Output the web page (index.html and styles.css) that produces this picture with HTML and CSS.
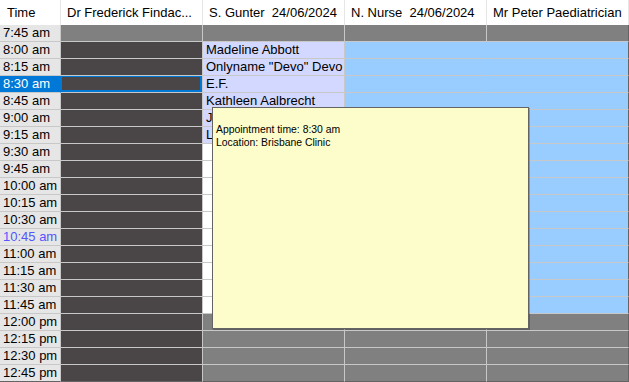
FILE: index.html
```html
<!DOCTYPE html>
<html>

<head>
    <meta charset="utf-8">
    <title>Appointment Book</title>
    <link rel="stylesheet" href="styles.css">
</head>

<body>
    <div class="book">
        <div class="row head">
          <div class="cell">Time</div>
          <div class="cell">Dr Frederick Findac...</div>
          <div class="cell">S. Gunter  24/06/2024</div>
          <div class="cell">N. Nurse  24/06/2024</div>
          <div class="cell">Mr Peter Paediatrician</div>
        </div>

        <div class="row">
          <div class="cell time">7:45 am</div>
          <div class="cell off"></div>
          <div class="cell off"></div>
          <div class="cell off"></div>
          <div class="cell off"></div>
        </div>
        <div class="row">
          <div class="cell time">8:00 am</div>
          <div class="cell closed"></div>
          <div class="cell booked">Madeline Abbott</div>
          <div class="cell open"></div>
          <div class="cell open"></div>
        </div>
        <div class="row">
          <div class="cell time">8:15 am</div>
          <div class="cell closed"></div>
          <div class="cell booked">Onlyname "Devo" Devo</div>
          <div class="cell open"></div>
          <div class="cell open"></div>
        </div>
        <div class="row selected">
          <div class="cell time">8:30 am</div>
          <div class="cell closed"></div>
          <div class="cell booked">E.F.</div>
          <div class="cell open"></div>
          <div class="cell open"></div>
        </div>
        <div class="row">
          <div class="cell time">8:45 am</div>
          <div class="cell closed"></div>
          <div class="cell booked">Kathleen Aalbrecht</div>
          <div class="cell open"></div>
          <div class="cell open"></div>
        </div>
        <div class="row">
          <div class="cell time">9:00 am</div>
          <div class="cell closed"></div>
          <div class="cell booked">J</div>
          <div class="cell open"></div>
          <div class="cell open"></div>
        </div>
        <div class="row">
          <div class="cell time">9:15 am</div>
          <div class="cell closed"></div>
          <div class="cell booked">L</div>
          <div class="cell open"></div>
          <div class="cell open"></div>
        </div>
        <div class="row">
          <div class="cell time">9:30 am</div>
          <div class="cell closed"></div>
          <div class="cell free"></div>
          <div class="cell open"></div>
          <div class="cell open"></div>
        </div>
        <div class="row">
          <div class="cell time">9:45 am</div>
          <div class="cell closed"></div>
          <div class="cell free"></div>
          <div class="cell open"></div>
          <div class="cell open"></div>
        </div>
        <div class="row">
          <div class="cell time">10:00 am</div>
          <div class="cell closed"></div>
          <div class="cell free"></div>
          <div class="cell open"></div>
          <div class="cell open"></div>
        </div>
        <div class="row">
          <div class="cell time">10:15 am</div>
          <div class="cell closed"></div>
          <div class="cell free"></div>
          <div class="cell open"></div>
          <div class="cell open"></div>
        </div>
        <div class="row">
          <div class="cell time">10:30 am</div>
          <div class="cell closed"></div>
          <div class="cell free"></div>
          <div class="cell open"></div>
          <div class="cell open"></div>
        </div>
        <div class="row">
          <div class="cell time now">10:45 am</div>
          <div class="cell closed"></div>
          <div class="cell free"></div>
          <div class="cell open"></div>
          <div class="cell open"></div>
        </div>
        <div class="row">
          <div class="cell time">11:00 am</div>
          <div class="cell closed"></div>
          <div class="cell free"></div>
          <div class="cell open"></div>
          <div class="cell open"></div>
        </div>
        <div class="row">
          <div class="cell time">11:15 am</div>
          <div class="cell closed"></div>
          <div class="cell free"></div>
          <div class="cell open"></div>
          <div class="cell open"></div>
        </div>
        <div class="row">
          <div class="cell time">11:30 am</div>
          <div class="cell closed"></div>
          <div class="cell free"></div>
          <div class="cell open"></div>
          <div class="cell open"></div>
        </div>
        <div class="row">
          <div class="cell time">11:45 am</div>
          <div class="cell closed"></div>
          <div class="cell free"></div>
          <div class="cell open"></div>
          <div class="cell open"></div>
        </div>
        <div class="row">
          <div class="cell time">12:00 pm</div>
          <div class="cell closed"></div>
          <div class="cell off"></div>
          <div class="cell off"></div>
          <div class="cell off"></div>
        </div>
        <div class="row">
          <div class="cell time">12:15 pm</div>
          <div class="cell closed"></div>
          <div class="cell off"></div>
          <div class="cell off"></div>
          <div class="cell off"></div>
        </div>
        <div class="row">
          <div class="cell time">12:30 pm</div>
          <div class="cell closed"></div>
          <div class="cell off"></div>
          <div class="cell off"></div>
          <div class="cell off"></div>
        </div>
        <div class="row last">
          <div class="cell time">12:45 pm</div>
          <div class="cell closed"></div>
          <div class="cell off"></div>
          <div class="cell off"></div>
          <div class="cell off"></div>
        </div>

        <!-- hint shown over the hovered appointment -->
        <div class="hint">
          <div class="hint-line">Appointment time: 8:30 am</div>
          <div class="hint-line">Location: Brisbane Clinic</div>
        </div>
    </div>
</body>

</html>
```

FILE: styles.css
```css
body {
  margin: 0;
  background: #fff;
}

.book {
  /* whole appointment grid, fills the window */
  position: relative;
  width: 629px;
  height: 382px;
  overflow: hidden;
  font: 13px "Liberation Sans", Arial, sans-serif;
  color: #000;
}

.row {
  display: grid;
  grid-template-columns: 61px 142px 142px 142px 142px;
  height: 17px;
}

.cell {
  box-sizing: border-box;
  border-right: 1px solid #c8c8c8;
  border-bottom: 1px solid #c8c8c8;
  line-height: 16px;
  padding-left: 3px;
  white-space: pre;
  overflow: hidden;
}

.cell:last-child {
  border-right-color: #646464;
}

.row.last .cell {
  border-bottom-color: #646464;
}

/* column titles */
.row.head {
  height: 25px;
}

.head .cell {
  background: #fff;
  border-bottom: 0;
  border-right-color: #e6e6e6;
  line-height: 25px;
  padding-left: 6px;
}

.head .cell:first-child {
  padding-left: 7px;
}

.time {
  background: #e6e6e6;
}

.time.now {
  color: #5555ff;
}

.off {
  background: #808080;
}

.closed {
  background: #4a4647;
}

.booked {
  background: #d2d8ff;
}

.free {
  background: #fff;
}

.open {
  /* no divider between the open blue columns */
  background: #99ccff;
  border-right-color: #99ccff;
}

.open:last-child {
  border-right-color: #646464;
}

/* row with keyboard focus */
.selected .time {
  background: #0078d7;
  color: #fff;
  border-right-color: #0078d7;
}

.selected .closed {
  box-shadow: inset 1px 1px 0 #0078d7, inset -2px -2px 0 #0078d7;
}

.hint {
  position: absolute;
  left: 212px;
  top: 107px;
  width: 309px;
  height: 204px;
  padding: 16px 3px 0 3px;
  background: #fdfdcc;
  border: 1px solid #646464;
  box-shadow: 1px 1px 0 rgba(0, 0, 0, 0.25);
  font-size: 10.4px;
}

.hint-line {
  height: 13px;
  line-height: 12px;
}
```
